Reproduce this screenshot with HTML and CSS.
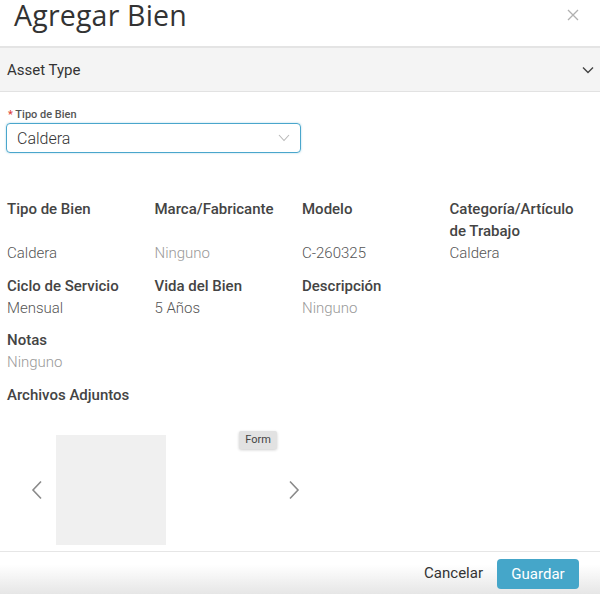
FILE: index.html
```html
<!DOCTYPE html>
<html lang="es">
<head>
<meta charset="utf-8">
<link rel="stylesheet" href="styles.css">
</head>
<body>
<div class="modal">
  <div class="header">
    <h1 class="title">Agregar Bien</h1>
    <svg class="close" width="12" height="12" viewBox="0 0 12 12"><path d="M1 1L11 11M11 1L1 11" stroke="#b0b0b0" stroke-width="1.3" fill="none"/></svg>
  </div>
  <div class="section-bar">
    <span>Asset Type</span>
    <svg width="12" height="8" viewBox="0 0 12 8"><path d="M1 1.5L6 6.5L11 1.5" stroke="#444" stroke-width="1.4" fill="none"/></svg>
  </div>
  <div class="form">
    <div class="field-label"><span class="req">*</span> Tipo de Bien</div>
    <div class="select">
      <span>Caldera</span>
      <svg width="12" height="8" viewBox="0 0 12 8"><path d="M1 1L6 6.5L11 1" stroke="#b8b8b8" stroke-width="1.1" fill="none"/></svg>
    </div>
  </div>
  <div class="details">
    <div class="lbl">Tipo de Bien</div>
    <div class="lbl">Marca/Fabricante</div>
    <div class="lbl">Modelo</div>
    <div class="lbl">Categoría/Artículo de Trabajo</div>
    <div class="val dark">Caldera</div>
    <div class="val light">Ninguno</div>
    <div class="val dark">C-260325</div>
    <div class="val dark">Caldera</div>

    <div class="lbl">Ciclo de Servicio</div>
    <div class="lbl">Vida del Bien</div>
    <div class="lbl">Descripción</div>
    <div class="lbl"></div>
    <div class="val dark">Mensual</div>
    <div class="val dark">5 Años</div>
    <div class="val light">Ninguno</div>
    <div class="val"></div>

    <div class="lbl">Notas</div>
    <div class="lbl"></div><div class="lbl"></div><div class="lbl"></div>
    <div class="val light">Ninguno</div>
    <div class="val"></div><div class="val"></div><div class="val"></div>

    <div class="lbl wide">Archivos Adjuntos</div>
  </div>
  <div class="carousel">
    <svg class="arrow" width="12" height="20" viewBox="0 0 12 20"><path d="M10 1.5L2 10L10 18.5" stroke="#8a8a8a" stroke-width="1.6" fill="none"/></svg>
    <div class="thumb"></div>
    <div class="spacer"></div>
    <svg class="arrow" width="12" height="20" viewBox="0 0 12 20"><path d="M2 1.5L10 10L2 18.5" stroke="#8a8a8a" stroke-width="1.6" fill="none"/></svg>
    <div class="tooltip">Form</div>
  </div>
  <div class="footer">
    <button class="btn-cancel">Cancelar</button>
    <button class="btn-save">Guardar</button>
  </div>
</div>
</body>
</html>
```

FILE: styles.css
```css
* { box-sizing: border-box; }
html, body { margin: 0; padding: 0; background: #fff; }
body { font-family: Roboto, "Liberation Sans", sans-serif; color: #333; width: 600px; height: 594px; overflow: hidden; }
.modal { width: 600px; height: 594px; display: flex; flex-direction: column; }
.header { height: 46px; display: flex; align-items: flex-start; justify-content: space-between; padding: 0 21px 0 14px; }
.title { margin: 0; font-family: "Open Sans", sans-serif; font-weight: 400; font-size: 28.5px; line-height: 30px; color: #333; letter-spacing: 0.2px; }
.close { margin-top: 9px; }
.section-bar { height: 46px; border-top: 2px solid #e4e4e4; border-bottom: 1px solid #e2e2e2; background: #f4f4f4; display: flex; align-items: center; justify-content: space-between; padding: 0 6px 0 7px; font-size: 15px; color: #333; }
.form { padding: 16px 0 0 6px; }
.field-label { font-size: 11px; font-weight: 500; color: #555; line-height: 14px; padding-left: 2px; }
.req { color: #e0413a; }
.select { margin-top: 1px; width: 295px; height: 30px; border: 1.5px solid #4aa6cc; border-radius: 4px; box-shadow: 0 0 2px rgba(74,166,204,0.5); display: flex; align-items: center; justify-content: space-between; padding: 0 10px 0 10px; font-size: 16px; font-weight: 300; color: #333; }
.details { margin-top: 45px; padding: 0 0 0 7px; display: grid; grid-template-columns: repeat(4, 147.5px); }
.lbl { font-size: 15px; font-weight: 500; line-height: 22px; color: #444; padding-right: 18px; }
.lbl.wide { grid-column: 1 / span 4; }
.val { font-size: 15px; font-weight: 300; line-height: 22px; margin-bottom: 10.5px; }
.val.dark { color: #555; }
.val.light { color: #999; }
.carousel { position: relative; flex: 1; display: flex; align-items: center; padding: 24px 0 0 31px; }
.arrow { flex: none; }
.thumb { width: 110px; height: 110px; background: #f0f0f0; margin-left: 13px; }
.spacer { width: 122px; }
.tooltip { position: absolute; left: 239px; top: 25px; width: 38px; height: 18px; background: #e2e2e2; border-radius: 2px; box-shadow: 0 1px 3px rgba(0,0,0,0.2); font-size: 11px; line-height: 18px; text-align: center; color: #444; }
.footer { height: 43px; border-top: 1px solid #e6e6e6; background: linear-gradient(#fff 0%, #fff 30%, #e6e6e6 100%); display: flex; align-items: center; justify-content: flex-end; padding: 0 21px 0 0; gap: 14px; }
.btn-cancel { border: none; background: transparent; font-family: Roboto, sans-serif; font-size: 15px; color: #333; padding: 0; }
.btn-save { border: none; background: #45a6c9; color: #fff; font-family: Roboto, sans-serif; font-size: 15px; width: 82px; height: 30px; border-radius: 4px; margin-top: 1px; }
```
